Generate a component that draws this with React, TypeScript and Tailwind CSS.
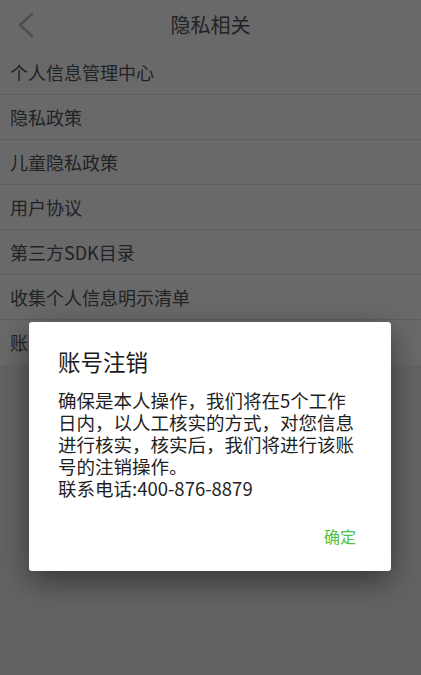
const items = [
  "个人信息管理中心",
  "隐私政策",
  "儿童隐私政策",
  "用户协议",
  "第三方SDK目录",
  "收集个人信息明示清单",
  "账号注销",
];

const font = { fontFamily: '"Noto Sans CJK SC", "Noto Sans", sans-serif' };

export default function App() {
  return (
    <div className="relative h-[675px] w-[421px] overflow-hidden bg-[#eef0f3]" style={font}>
      {/* page under the dialog */}
      <div className="bg-white">
        <div className="relative flex h-[50px] items-center justify-center">
          <svg className="absolute left-[14px] top-[11px]" width="24" height="28" viewBox="0 0 24 28" fill="none">
            <path d="M18 3 L6 14 L18 25" stroke="#bac1cd" strokeWidth="3" strokeLinecap="round" strokeLinejoin="round" />
          </svg>
          <span className="text-[20px] text-[#50555e]">隐私相关</span>
        </div>
        <ul>
          {items.map((item, i) => (
            <li
              key={item}
              className={
                "flex h-[45px] items-center pl-[10px] text-[18px] text-[#50555e] " +
                (i < items.length - 1 ? "border-b border-[#e6e6e6]" : "")
              }
            >
              {item}
            </li>
          ))}
        </ul>
      </div>

      {/* mask */}
      <div className="absolute inset-0 bg-black/[0.59]" />

      {/* dialog */}
      <div className="absolute left-[29px] top-[322px] w-[362px] rounded-[3px] bg-white pb-[23px] pl-[29px] pr-[35px] pt-[24px] shadow-[0_10px_30px_rgba(0,0,0,0.45)]">
        <div className="text-[22.5px] leading-[30px] text-[#1a1a1a]">账号注销</div>
        <p className="mt-[13px] text-[18.5px] leading-[22px] text-[#1f1f1f]">
          确保是本人操作，我们将在5个工作日内，以人工核实的方式，对您信息进行核实，核实后，我们将进行该账号的注销操作。
          <br />
          联系电话:400-876-8879
        </p>
        <div className="mt-[25px] flex justify-end">
          <button className="text-[16px] leading-[24px] text-[#4fc441]">确定</button>
        </div>
      </div>
    </div>
  );
}
